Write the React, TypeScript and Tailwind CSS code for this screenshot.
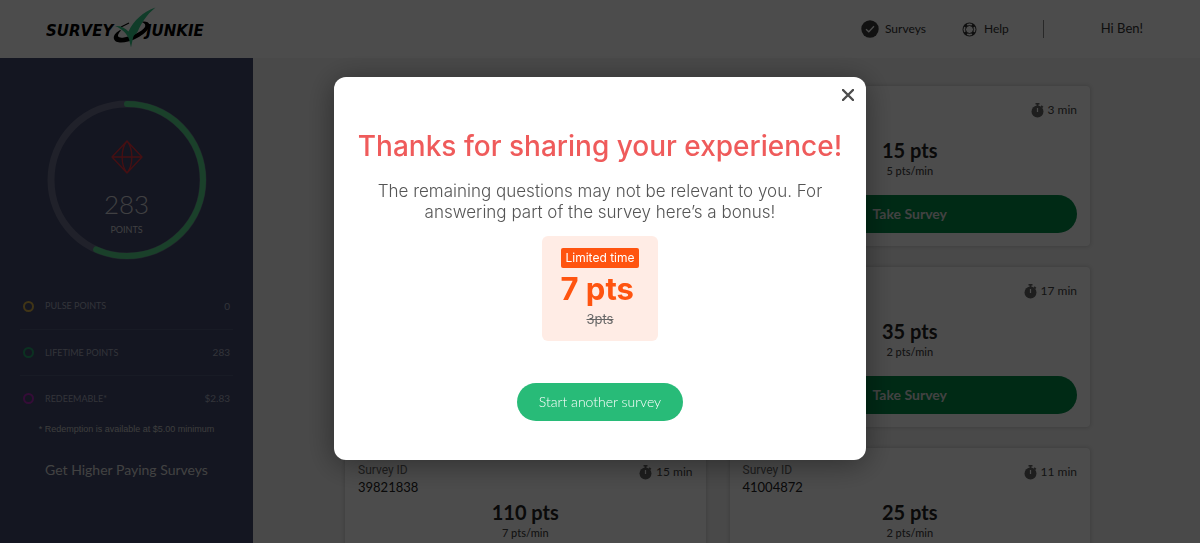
import React, { useState } from 'react';

interface Survey {
  id: string;
  minutes: number;
  points: number;
  rate: number;
  showId?: boolean;
  className?: string;
}

const surveys: Survey[] = [
  { id: '40117253', minutes: 3, points: 15, rate: 5, className: 'col-start-2' },
  { id: '40562918', minutes: 17, points: 35, rate: 2, className: 'col-start-2' },
  { id: '39821838', minutes: 15, points: 110, rate: 7, showId: true },
  { id: '41004872', minutes: 11, points: 25, rate: 2, showId: true },
];

const balances = [
  { label: 'PULSE POINTS', value: '0', ring: 'border-[#d9b24a]' },
  { label: 'LIFETIME POINTS', value: '283', ring: 'border-[#26a671]' },
  { label: 'REDEEMABLE*', value: '$2.83', ring: 'border-[#b02ab8]' },
];

const Logo: React.FC = () => (
  <svg viewBox="0 0 160 44" className="h-11 w-40" role="img" aria-label="Survey Junkie">
    <g className="fill-black font-['DejaVu_Sans',sans-serif] text-[15px] font-bold italic">
      <text x="0" y="29">SURVEY</text>
      <text x="100" y="29">JUNKIE</text>
    </g>
    {/* orbit */}
    <path
      fill="#000"
      d="M74 23 C69 26 67 29 68 32 C69 36 76 36 82 34.5 C93 32 104 23 103.5 18 C103 14 98 14 93 15 C98 15 100 17 99 20 C96 25 86 29 78 30.5 C73 31.2 69 30 75 23.5 Z"
    />
    <path fill="none" stroke="#000" strokeWidth="1.2" d="M75 20 L83 16" />
    {/* check mark */}
    <path
      fill="#36c889"
      d="M69 19 C74 18.5 79 20.5 82.5 24.5 C88 13 97 5 109.5 0.5 C100 8 95 17 92 24 C90 28 88 27 87 31 L85 40.5 L83 32 C81 27 76 21.5 69 19 Z"
    />
  </svg>
);

const CheckBadge: React.FC = () => (
  <svg viewBox="0 0 18 18" className="size-[18px]" aria-hidden="true">
    <circle cx="9" cy="9" r="8.7" fill="#3a3a3a" />
    <path d="M5 9.2 L7.8 11.8 L13 6.3" fill="none" stroke="#fff" strokeWidth="1.3" />
  </svg>
);

const LifeRing: React.FC = () => (
  <svg viewBox="0 0 15 15" className="size-[15px]" aria-hidden="true">
    <g fill="none" stroke="#333">
      <circle cx="7.5" cy="7.5" r="6.5" />
      <circle cx="7.5" cy="7.5" r="4" />
      <circle
        cx="7.5"
        cy="7.5"
        r="5.4"
        strokeWidth="3.2"
        pathLength="360"
        strokeDasharray="34 56"
        strokeDashoffset="-28"
      />
    </g>
  </svg>
);

const Stopwatch: React.FC = () => (
  <svg viewBox="0 0 13 15" className="h-[15px] w-[13px]" aria-hidden="true">
    <g fill="#666">
      <circle cx="6.5" cy="8.5" r="6" />
      <path d="M4.5 0 H8.5 V1.5 H7.4 V3 H5.6 V1.5 H4.5 Z" />
      <path d="M10.6 2.2 L12.4 3.8 L11.2 5 L9.6 3.4 Z" />
    </g>
    <path d="M6.5 5 V9" stroke="#fff" strokeWidth="1.2" />
  </svg>
);

const Gem: React.FC = () => (
  <svg viewBox="0 0 32 34" className="h-[34px] w-8" aria-hidden="true">
    <path
      d="M16 1 L31 17 L16 33 L1 17 Z M1 17 H31 M16 1 C9.5 9 9.5 25 16 33 M16 1 C22.5 9 22.5 25 16 33"
      fill="none"
      stroke="#e8343f"
      strokeWidth="1.3"
      strokeLinejoin="round"
    />
  </svg>
);

const Header: React.FC = () => (
  <header className="flex h-[58px] shrink-0 items-center justify-between bg-white pr-[57px] pl-[46px]">
    <Logo />
    <nav className="flex items-center text-[12px] text-[#333]">
      <a href="#surveys" className="flex items-center gap-1.5">
        <CheckBadge /> Surveys
      </a>
      <a href="#help" className="ml-9 flex items-center gap-[7px]">
        <LifeRing /> Help
      </a>
      <span className="ml-[34px] h-[18px] w-px bg-[#888]" />
      <span className="ml-[57px] text-[13px]">Hi Ben!</span>
    </nav>
  </header>
);

const Sidebar: React.FC = () => (
  <aside className="w-[253px] shrink-0 bg-[#434a6e] pt-[42px]">
    <div className="relative mx-auto size-40">
      <svg viewBox="0 0 160 160" className="size-full" aria-hidden="true">
        <circle cx="80" cy="80" r="76" fill="none" stroke="#6c6f8d" strokeWidth="7" />
        <circle
          cx="80"
          cy="80"
          r="76"
          fill="none"
          stroke="#57d68d"
          strokeWidth="6"
          strokeLinecap="round"
          pathLength="360"
          strokeDasharray="204 360"
          transform="rotate(-90 80 80)"
        />
      </svg>
      <div className="absolute inset-0 flex flex-col items-center pt-10 text-[#d6d6dc]">
        <Gem />
        <span className="mt-[14px] text-[26px] leading-8 font-light">283</span>
        <span className="mt-1 text-[9px] leading-3">POINTS</span>
      </div>
    </div>

    <dl className="mt-[23px] px-5 text-[10px] text-[#a9adc0]">
      {balances.map((b, i) => (
        <div
          key={b.label}
          className={`flex h-[46px] items-center pr-[3px] pl-[3px] ${i > 0 ? 'border-t border-[#525a7e]' : ''}`}
        >
          <dt className="flex items-center gap-[11px] text-[9px]">
            <span className={`size-[11px] rounded-full border-2 ${b.ring}`} />
            {b.label}
          </dt>
          <dd className="ml-auto">{b.value}</dd>
        </div>
      ))}
    </dl>
    <p className="text-center font-['Liberation_Sans',Arial,sans-serif] text-[9px] leading-4 text-[#ccc]">
      * Redemption is available at $5.00 minimum
    </p>
    <a href="#higher" className="mt-[23px] block text-center text-[14px] leading-5 text-[#ddd]">
      Get Higher Paying Surveys
    </a>
  </aside>
);

const SurveyCard: React.FC<{ survey: Survey }> = ({ survey }) => (
  <article
    className={`h-40 rounded-[4px] bg-white px-[13px] pt-4 shadow-[0_0_4px_rgba(0,0,0,0.2)] ${survey.className ?? ''}`}
  >
    <div className="flex h-8 items-start justify-between">
      <div>
        {survey.showId && (
          <>
            <p className="font-[Roboto,sans-serif] text-[12px] leading-3 text-[#666]">Survey ID</p>
            <p className="mt-[3px] text-[13px] leading-4 text-[#222]">{survey.id}</p>
          </>
        )}
      </div>
      <p className="flex items-center gap-1 text-[12px] leading-4 text-[#444]">
        <Stopwatch /> {survey.minutes} min
      </p>
    </div>
    <p className="mt-1 text-center text-[20px] leading-6 font-bold text-[#222]">{survey.points} pts</p>
    <p className="mt-[3px] text-center text-[11px] leading-3 font-medium text-[#444]">{survey.rate} pts/min</p>
    <button className="mt-[18px] h-[38px] w-full rounded-full bg-[#008c49] pb-0.5 text-[14px] font-bold text-[#ddd]">
      Take Survey
    </button>
  </article>
);

const BonusModal: React.FC<{ onClose: () => void }> = ({ onClose }) => (
  <div className="fixed inset-0 flex items-start justify-center bg-black/70 pt-[77px]">
    <div
      role="dialog"
      aria-labelledby="bonus-title"
      className="relative flex w-full max-w-[532px] flex-col items-center rounded-[12px] bg-white pt-[51px] pb-[39px] font-[Inter,sans-serif] shadow-[0_4px_30px_rgba(0,0,0,0.4)]"
    >
      <button onClick={onClose} aria-label="Close" className="absolute top-3 right-3 text-[#4d4d4d]">
        <svg viewBox="0 0 12 12" className="size-3" aria-hidden="true">
          <path d="M1 1 L11 11 M11 1 L1 11" stroke="currentColor" strokeWidth="2.4" strokeLinecap="round" />
        </svg>
      </button>
      <h1 id="bonus-title" className="text-[28px] leading-9 font-medium text-[#ef5b5b]">
        Thanks for sharing your experience!
      </h1>
      <p className="mt-[17px] text-center text-[17px] leading-[21px] font-light text-[#555]">
        The remaining questions may not be relevant to you. For
        <br />
        answering part of the survey here’s a bonus!
      </p>
      <div className="mt-[13px] rounded-[6px] bg-[#ffece5] px-[19px] pt-3 pb-3">
        <span className="block rounded-[2px] bg-[#ff5410] px-[5px] text-[12px] leading-5 text-white">
          Limited time
        </span>
        <p className="text-[31px] leading-[42px] font-bold text-[#ff5410]">7 pts</p>
        <p className="text-center text-[13px] leading-[19px] text-[#666] line-through">3pts</p>
      </div>
      <button className="mt-[42px] h-[38px] rounded-full bg-[#28bb78] px-[22px] pb-0.5 font-[Lato,sans-serif] text-[14px] font-light text-white">
        Start another survey
      </button>
    </div>
  </div>
);

const App: React.FC = () => {
  const [modalOpen, setModalOpen] = useState(true);

  return (
    <div className="flex h-screen flex-col overflow-hidden bg-[#f3f3f3] font-[Lato,sans-serif]">
      <Header />
      <div className="flex min-h-0 flex-1">
        <Sidebar />
        <main className="grid flex-1 auto-rows-max grid-cols-2 gap-x-6 gap-y-[21px] pt-7 pr-[110px] pl-[92px]">
          {surveys.map(s => (
            <SurveyCard key={s.id} survey={s} />
          ))}
        </main>
      </div>
      {modalOpen && <BonusModal onClose={() => setModalOpen(false)} />}
    </div>
  );
};

export default App;
